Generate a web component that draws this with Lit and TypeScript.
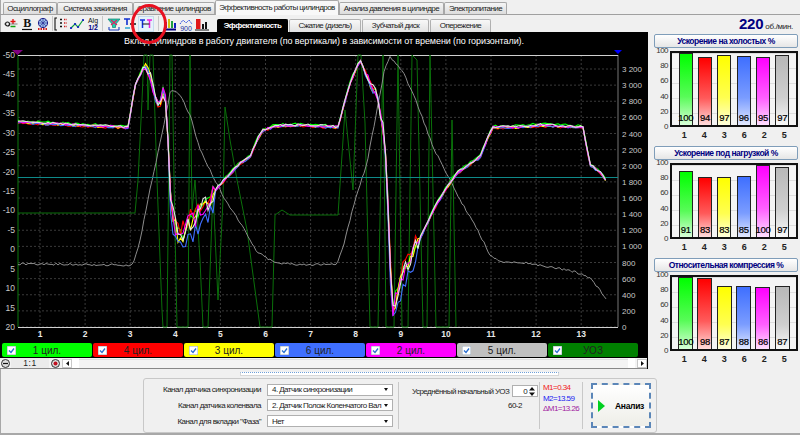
import { LitElement, html, svg, css } from 'lit';
import { customElement, property } from 'lit/decorators.js';

type Pt = [number, number];

// Curves are in reference pixels, viewBox of the plot starts at y=50.
const EFFECT: Pt[] = [
  [18, 122], [60, 124], [100, 126], [128, 127], [135, 86], [145, 64], [150, 75], [155, 97], [159, 108],
  [163, 92], [166, 100], [168, 140], [170, 197], [175, 225], [180, 240], [187, 225], [195, 220], [200, 210],
  [210, 200], [218, 187], [227, 177], [240, 163], [250, 157], [257, 140], [263, 130], [275, 126], [300, 125],
  [338, 127], [350, 83], [360, 60], [370, 83], [377, 95], [383, 127], [387, 173], [390, 260], [393, 312],
  [398, 290], [405, 270], [415, 248], [425, 228], [435, 207], [447, 187], [457, 173], [480, 157], [488, 137],
  [493, 127], [517, 127], [540, 125], [583, 127], [590, 165], [600, 172], [606, 180],
];

const RPM: Pt[] = [
  [18, 264], [133, 265], [140, 240], [150, 190], [163, 130], [170, 93], [173, 90], [180, 95], [190, 115],
  [200, 150], [215, 180], [225, 200], [245, 230], [257, 252], [273, 262], [297, 265], [337, 264], [345, 240],
  [355, 200], [367, 163], [385, 67], [390, 57], [402, 70], [417, 103], [433, 147], [450, 180], [460, 200],
  [475, 225], [490, 255], [500, 262], [530, 263], [575, 272], [590, 278], [600, 290], [606, 300],
];

const UOZ: Pt[] = [
  [18, 213], [135, 213], [138, 180], [142, 100], [144, 55], [147, 55], [148, 110], [150, 55], [153, 55],
  [157, 180], [162, 310], [163, 327], [167, 327], [170, 55], [172, 55], [174, 180], [177, 327], [188, 327],
  [190, 55], [192, 210], [195, 180], [200, 260], [203, 327], [208, 327], [213, 190], [218, 300], [223, 200],
  [225, 107], [230, 140], [237, 180], [247, 230], [260, 327], [272, 327], [275, 215], [282, 210], [290, 215],
  [338, 215], [345, 110], [353, 190], [358, 55], [361, 55], [365, 123], [370, 327], [378, 327], [383, 55],
  [386, 327], [394, 327], [398, 55], [402, 327], [408, 327], [412, 55], [417, 60], [423, 327], [427, 327],
  [430, 55], [436, 327], [449, 327], [452, 120], [456, 327],
];

const LINES = ['#00ff00', '#ff0000', '#ffff00', '#3f6fff', '#ff00ff', '#e4e4e4'];

const yLabels = [-50, -45, -40, -35, -30, -25, -20, -15, -10, -5, 0, 5, 10, 15, 20];
const rpmLabels = [3200, 3000, 2800, 2600, 2400, 2200, 2000, 1800, 1600, 1400, 1200, 1000, 800, 600, 400, 200, 0];

const rnd = (seed: number) => {
  const v = Math.sin(seed * 127.1) * 43758.5453;
  return v - Math.floor(v);
};

const at = (pts: Pt[], x: number) => {
  for (let i = 1; i < pts.length; i++) {
    if (x <= pts[i][0]) {
      const [x0, y0] = pts[i - 1];
      const [x1, y1] = pts[i];
      return y0 + ((y1 - y0) * (x - x0)) / (x1 - x0);
    }
  }
  return pts[pts.length - 1][1];
};

const noiseAt = (x: number) => {
  if ((x > 168 && x < 215) || (x > 386 && x < 420)) return 10;
  if ((x > 145 && x < 168) || (x > 365 && x < 386)) return 5;
  return 1.2;
};

const cylinderPoints = (idx: number) => {
  const out: string[] = [];
  const offset = [-1.2, 1, 0.4, 0.7, 0, -0.4][idx];
  for (let x = 18; x <= 606; x += 2.5) {
    const amp = noiseAt(x);
    const bias = idx === 3 && amp > 5 ? 11 : idx === 1 && amp > 5 ? -6 : 0;
    const y = at(EFFECT, x) + offset + bias + (rnd(x * (idx + 1.3)) - 0.5) * amp * 1.8;
    out.push(`${x},${y.toFixed(1)}`);
  }
  return out.join(' ');
};

const rpmPoints = () => {
  const out: string[] = [];
  for (let x = 18; x <= 606; x += 2) {
    out.push(`${x},${(at(RPM, x) + (rnd(x * 3.7) - 0.5) * 2.2).toFixed(1)}`);
  }
  return out.join(' ');
};

const CYL_POINTS = LINES.map((_, i) => cylinderPoints(i));
const RPM_POINTS = rpmPoints();
const UOZ_POINTS = UOZ.map((p) => p.join(',')).join(' ');

@customElement('bar-panel')
export class BarPanel extends LitElement {
  @property() heading = '';
  @property({ type: Array }) values: number[] = [];
  @property({ type: Boolean }) wide = false;

  static styles = css`
    :host {
      display: block;
      font-family: 'Liberation Sans', sans-serif;
    }
    .title {
      height: 14px;
      box-sizing: border-box;
      border: 1px solid #7f9db9;
      border-radius: 2px;
      background: linear-gradient(#ffffff, #e6e6e6);
      color: #000080;
      font-size: 8.5px;
      letter-spacing: -0.5px;
      font-weight: bold;
      line-height: 12px;
      text-align: center;
      white-space: nowrap;
    }
    .chart {
      display: grid;
      grid-template-columns: 16px 1fr;
      margin-top: 3px;
    }
    .axis {
      display: flex;
      flex-direction: column;
      justify-content: space-between;
      font-size: 8px;
      color: #333;
      text-align: right;
      padding-right: 2px;
    }
    .axis span {
      height: 0;
      line-height: 0;
    }
    .plot {
      height: 76px;
      box-sizing: border-box;
      border: 2px solid #111;
      display: flex;
      justify-content: space-around;
      align-items: flex-end;
      padding: 0 4px;
      background-color: #f4f4f4;
      background-image: repeating-linear-gradient(#dddddd 0 1px, transparent 1px 15px);
    }
    .bar {
      width: 14px;
      box-sizing: border-box;
      border: 1.5px solid #222;
      border-bottom: none;
      display: flex;
      align-items: flex-end;
      justify-content: center;
      font-size: 9.5px;
      letter-spacing: -0.3px;
      color: #000;
      padding-bottom: 2px;
      -webkit-text-stroke: 0.2px #000;
    }
    .wide .bar {
      width: 15px;
    }
    .names {
      grid-column: 2;
      display: flex;
      justify-content: space-around;
      padding: 3px 4px 0;
      font-size: 9px;
      font-weight: bold;
      color: #222;
      height: 12px;
    }
    .names span {
      width: 14px;
      text-align: center;
    }
    .c0 { background: linear-gradient(#00ff00, #58fb58 60%, #d8ffd8); }
    .c1 { background: linear-gradient(#ff0000, #ff5a5a 60%, #ffdcdc); }
    .c2 { background: linear-gradient(#ffff00, #ffff50 60%, #ffffdc); }
    .c3 { background: linear-gradient(#3f6fff, #7a9cff 60%, #e2e9ff); }
    .c4 { background: linear-gradient(#ff00ff, #ff60ff 60%, #ffe0ff); }
    .c5 { background: linear-gradient(#b8b8b8, #cfcfcf 60%, #f8f8f8); }
  `;

  render() {
    const names = [1, 4, 3, 6, 2, 5];
    return html`
      <div class="title">${this.heading}</div>
      <div class="chart ${this.wide ? 'wide' : ''}">
        <div class="axis">
          ${[100, 80, 60, 40, 20, 0].map((v) => html`<span>${v}</span>`)}
        </div>
        <div class="plot">
          ${this.values.map(
            (v, i) => html`<div class="bar c${i}" style="height:${v}%">${v}</div>`
          )}
        </div>
        <div class="names">${names.map((n) => html`<span>${n}</span>`)}</div>
      </div>
    `;
  }
}

@customElement('app-root')
export class AppRoot extends LitElement {
  static styles = css`
    :host {
      display: block;
      position: relative;
      width: 800px;
      height: 435px;
      overflow: hidden;
      background: #f0f0f0;
      box-shadow: inset 1px 0 0 #a8a8a8, inset 0 -2px 0 #a8a8a8;
      font-family: 'Liberation Sans', sans-serif;
      font-size: 8px;
      letter-spacing: -0.55px;
      color: #222;
    }
    .tabs {
      display: flex;
      height: 15px;
      padding-left: 3px;
      box-sizing: border-box;
      border-bottom: 1px solid #a0a0a0;
    }
    .tab {
      height: 12px;
      margin-top: 2px;
      box-sizing: border-box;
      border: 1px solid #a8a8a8;
      border-bottom: none;
      border-radius: 2px 2px 0 0;
      background: linear-gradient(#f6f6f6, #dcdcdc);
      line-height: 11px;
      text-align: center;
      white-space: nowrap;
    }
    .tab.on {
      height: 15px;
      margin-top: 0;
      background: #f8f8f8;
      line-height: 13px;
    }
    .toolbar {
      display: flex;
      align-items: center;
      height: 17px;
    }
    .group {
      display: flex;
      height: 15px;
      align-items: center;
      padding-right: 1px;
      border-right: 1px solid #c8c8c8;
    }
    .group:nth-child(1) { padding-left: 3px; }
    .group:nth-child(2) { padding-left: 0; }
    .group:nth-child(3) { padding-left: 3px; padding-right: 4px; }
    .group:nth-child(4) { padding-left: 3px; border-right: none; }
    .tool {
      width: 16px;
      height: 16px;
      display: flex;
      align-items: center;
      justify-content: center;
      box-sizing: border-box;
    }
    .tool.on {
      background: #e6f2fb;
      border: 1px solid #c4dcee;
    }
    .tool svg {
      width: 14px;
      height: 14px;
    }
    .subtabs {
      display: flex;
      margin-left: 6px;
      gap: 1px;
      align-self: flex-end;
    }
    .subtab {
      height: 13px;
      box-sizing: border-box;
      border: 1px solid #b0b0b0;
      border-bottom: none;
      border-radius: 2px 2px 0 0;
      background: linear-gradient(#f8f8f8, #e2e2e2);
      line-height: 12px;
      text-align: center;
      white-space: nowrap;
    }
    .subtab.on {
      background: #000;
      border-color: #000;
      color: #fff;
      font-weight: bold;
    }
    .rpm {
      margin-left: auto;
      padding-right: 7px;
      letter-spacing: -0.3px;
    }
    .rpm b {
      font-size: 15px;
      letter-spacing: -0.2px;
      color: #000080;
      margin-right: 2px;
    }
    .main {
      display: flex;
      height: 337px;
    }
    .scope {
      width: 648px;
      height: 337px;
      background: #000;
      display: flex;
      flex-direction: column;
    }
    .heading {
      height: 18px;
      color: #fff;
      font-size: 9px;
      letter-spacing: -0.09px;
      line-height: 18px;
      text-align: center;
    }
    .scope svg.plot {
      display: block;
      width: 648px;
      height: 293px;
      font-family: 'Liberation Sans', sans-serif;
      letter-spacing: 0;
    }
    .legend {
      display: flex;
      gap: 1px;
      padding: 0 2px;
      height: 15px;
    }
    .cyl {
      width: 90px;
      height: 14px;
      box-sizing: border-box;
      border-radius: 2px;
      display: flex;
      align-items: center;
      padding-left: 5px;
      font-size: 10px;
      letter-spacing: 0;
    }
    .cyl svg {
      width: 9px;
      height: 9px;
      flex: none;
    }
    .cyl span {
      flex: 1;
      text-align: center;
      padding-right: 14px;
    }
    .scroll {
      height: 11px;
      display: flex;
      align-items: center;
      background: #f4f4f4;
      border-bottom: 1px solid #888;
      box-sizing: border-box;
      margin-right: 1px;
    }
    .round {
      width: 9px;
      height: 9px;
      flex: none;
      margin-left: 1px;
    }
    .zoom {
      width: 38px;
      text-align: center;
      background: #ebebeb;
      font-size: 8.5px;
      line-height: 10px;
      margin: 0 1px;
      letter-spacing: 0.5px;
    }
    .arrow {
      width: 10px;
      height: 9px;
      background: #fff;
      border: 1px solid #c8c8c8;
      box-sizing: border-box;
      display: flex;
      align-items: center;
      justify-content: center;
      flex: none;
      margin-left: 2px;
    }
    .thumb,
    .end {
      width: 7px;
      height: 10px;
      background: #fff;
      flex: none;
    }
    .track {
      flex: 1;
      height: 9px;
      background: #f4f4f4;
      border-top: 1px solid #e0e0e0;
      box-sizing: border-box;
    }
    .side {
      width: 144px;
      margin-left: 6px;
      display: flex;
      flex-direction: column;
      padding-top: 2px;
    }
    .side bar-panel:nth-child(1),
    .side bar-panel:nth-child(2) {
      height: 112px;
    }
    .dots {
      margin: 3px 0 0 240px;
      width: 319px;
      height: 4px;
      box-sizing: border-box;
      background: #fff;
      border: 1px solid #d8d8d8;
      border-top: 1px dotted #6f9fd8;
    }
    .bottom {
      margin: 2px 0 0 143px;
      width: 514px;
      height: 55px;
      box-sizing: border-box;
      border: 1px solid #c8c8c8;
      border-radius: 3px;
      display: flex;
    }
    .channels {
      width: 255px;
      box-sizing: border-box;
      display: grid;
      grid-template-columns: 123px 127px;
      align-items: center;
      border-right: 1px solid #c8c8c8;
      margin: 3px 0;
      height: 47px;
    }
    .channels label {
      text-align: right;
      padding-right: 6px;
      white-space: nowrap;
    }
    .select {
      height: 12px;
      width: 126px;
      box-sizing: border-box;
      background: #fff;
      border: 1px solid #b0b0b0;
      display: flex;
      align-items: center;
      justify-content: space-between;
      padding: 0 4px;
      white-space: nowrap;
      overflow: hidden;
    }
    .select i {
      border: 2.5px solid transparent;
      border-top: 3px solid #111;
      border-bottom: none;
      flex: none;
      margin-left: 2px;
    }
    .uoz {
      width: 141px;
      border-right: 1px solid #c8c8c8;
      margin: 3px 0;
      box-sizing: border-box;
      padding-left: 13px;
    }
    .uoz-row {
      display: flex;
      align-items: center;
      gap: 3px;
      margin-top: 3px;
      white-space: nowrap;
    }
    .spin {
      width: 26px;
      height: 12px;
      box-sizing: border-box;
      background: #fff;
      border: 1px solid #b0b0b0;
      display: flex;
      align-items: center;
      justify-content: flex-end;
      gap: 2px;
      padding-right: 2px;
    }
    .spin svg {
      width: 6px;
      height: 9px;
    }
    .mode {
      margin: 4px 0 0 96px;
    }
    .stats {
      width: 43px;
      border-right: 1px solid #c8c8c8;
      margin: 3px 0;
      box-sizing: border-box;
      padding: 1px 0 0 3px;
      line-height: 10.5px;
      white-space: nowrap;
    }
    .m1 { color: #f02020; }
    .m2 { color: #2020f0; }
    .m3 { color: #a020a0; }
    .go {
      width: 60px;
      height: 45px;
      margin: 4px 0 0 8px;
      box-sizing: border-box;
      border: 2px dashed #5b86b8;
      background: linear-gradient(#ffffff, #eeeee8);
      display: flex;
      align-items: center;
      padding-left: 5px;
      font-size: 8.5px;
      letter-spacing: -0.3px;
      font-weight: bold;
      color: #000;
      gap: 10px;
    }
    .go svg {
      width: 7px;
      height: 12px;
    }
    .mark {
      position: absolute;
      left: 130px;
      top: 3px;
      width: 38px;
      height: 42px;
      pointer-events: none;
    }
  `;

  private icons = [
    svg`<circle cx="3.5" cy="7" r="2" fill="none" stroke="#111" stroke-width="1.2"/><path d="M9 2v5M6.5 4.5h5" stroke="#e01010" stroke-width="1.3"/><path d="M6.5 9.5h5" stroke="#10a010" stroke-width="1.5"/><path d="M0 7h2M5.500 7h8" stroke="#555" stroke-width=".7"/>`,
    svg`<text x="7" y="10" text-anchor="middle" font-family="Liberation Serif" font-weight="bold" font-size="12" fill="#111">B</text><path d="M2 12.5h10" stroke="#111" stroke-width="1.2"/>`,
    svg`<circle cx="7" cy="6" r="4.6" fill="#9cc0ec" stroke="#20208c"/><path d="M2.5 6h9M7 1.5v9M4 3l6 6M10 3l-6 6" stroke="#20208c" stroke-width=".6"/><path d="M2 12h10" stroke="#d02020" stroke-width="2" stroke-dasharray="1.5 1"/>`,
    svg`<path d="M3 1H1v12h2" fill="none" stroke="#111" stroke-width="1.1"/><path d="M6 2.5h2M6 6h2M6 9.5h2" stroke="#111" stroke-width="1.4"/><path d="M10 2.5h3M10 6h3M10 9.5h3" stroke="#d02020" stroke-width="1.6" stroke-dasharray="1 .6"/>`,
    svg`<path d="M1 11l4-4 3 3 5-7" fill="none" stroke="#10a040" stroke-width="1.2"/><path d="M1 11h.1M5 7h.1M8 10h.1M13 3h.1" stroke="#1020c0" stroke-width="2.2" stroke-linecap="round"/>`,
    svg`<text x="7" y="6" text-anchor="middle" font-family="Liberation Sans" font-size="7" fill="#111" letter-spacing="0">Alg</text><text x="7" y="13" text-anchor="middle" font-family="Liberation Sans" font-weight="bold" font-size="7" fill="#000080" letter-spacing="0">1/2</text>`,
    svg`<path d="M1 2h12L8.5 7.5v3h-3v-3z" fill="#20d0b0" stroke="#108070" stroke-width=".7"/><path d="M4 3l6 5M10 3L4 8" stroke="#e02060" stroke-width="1.1"/><path d="M2 13v-3M12 13v-3M2 13h10" stroke="#2040c0" stroke-width="1.1" fill="none"/>`,
    svg`<path d="M1 2h6M4 2v6" stroke="#1030d0" stroke-width="1.6"/><path d="M7 7h6M10 7v6" stroke="#111" stroke-width="1.4"/><path d="M2 11h5" stroke="#20a0d0" stroke-width="1.4"/>`,
    svg`<path d="M1 3h5M3.5 3v8" stroke="#1030e0" stroke-width="1.5"/><path d="M8 3h5M10.5 3v8" stroke="#f020e0" stroke-width="1.5"/><path d="M3.5 7h7" stroke="#111" stroke-width="1"/>`,
    svg`<path d="M3 11V5" stroke="#1020c0" stroke-width="2"/><path d="M6 11V2" stroke="#d0c010" stroke-width="2"/><path d="M9 11V4" stroke="#20a040" stroke-width="2"/><path d="M12 11V6" stroke="#1020c0" stroke-width="2"/><path d="M1 12.5h12" stroke="#000080" stroke-width="2"/>`,
    svg`<path d="M1 7l3-4 3 3 3-3 3 4" fill="none" stroke="#3050e0" stroke-width="1" stroke-dasharray="1.5 .7"/><text x="7" y="13.5" text-anchor="middle" font-family="Liberation Sans" font-size="7" fill="#1030a0" letter-spacing="0">900</text>`,
    svg`<rect x="1" y="2" width="4.5" height="10" fill="#e01818"/><path d="M8 12V7M11 12V5" stroke="#111" stroke-width="2"/><path d="M0 13h14" stroke="#111" stroke-width="1"/>`,
  ];

  private renderPlot() {
    const vGrid = Array.from({ length: 13 }, (_, i) => 40 + i * 45.1);
    const hGrid = rpmLabels.map((_, i) => 69 + i * 16.125);
    const rx = [1, 2, 3, 4, 5, 6, 7, 8, 9, 10, 11, 12, 13];
    return html`
      <svg class="plot" viewBox="0 50 648 293">
        ${vGrid.map(
          (x) => svg`<line x1=${x} x2=${x} y1="55" y2="327" stroke="#3a3a3a" stroke-dasharray="2 2"/>`
        )}
        ${hGrid.map(
          (y) => svg`<line x1="18" x2="618" y1=${y} y2=${y} stroke="#3a3a3a" stroke-dasharray="2 2"/>`
        )}
        <line x1="18" x2="18" y1="55" y2="327" stroke="#0c7a0c"/>
        <line x1="618" x2="618" y1="55" y2="327" stroke="#777"/>
        <line x1="18" x2="618" y1="55.5" y2="55.5" stroke="#d0d0d0"/>
        <line x1="18" x2="618" y1="327.5" y2="327.5" stroke="#d0d0d0"/>
        <polyline points=${UOZ_POINTS} fill="none" stroke="#0a700a" stroke-width="1"/>
        <polyline points=${RPM_POINTS} fill="none" stroke="#8c8c8c" stroke-width="1"/>
        <line x1="18" x2="618" y1="177.5" y2="177.5" stroke="#0e8a8a"/>
        ${CYL_POINTS.map(
          (p, i) => svg`<polyline points=${p} fill="none" stroke=${LINES[i]} stroke-width="1.1"/>`
        )}
        <path d="M12 50h11l-5.5 5z" fill="#800080"/>
        <path d="M613 49h10l-5 5z" fill="#0000ff"/>
        ${yLabels.map(
          (v, i) => svg`<text x="15" y=${55 + i * 19.43 + 3} text-anchor="end" font-size="8.5" fill="#c8c8c8">${v}</text>`
        )}
        ${rpmLabels.map(
          (v, i) => svg`<text x="622" y=${69 + i * 16.125 + 3} font-size="8" fill="#c8c8c8">${String(v).replace(/(\d)(\d{3})$/, '$1 $2')}</text>`
        )}
        ${rx.map(
          (n, i) => svg`<text x=${40 + i * 45.1} y="337" text-anchor="middle" font-size="8.5" font-weight="bold" fill="#e8e8e8">${n}</text>`
        )}
      </svg>
    `;
  }

  render() {
    const tabs: [string, number][] = [
      ['Осциллограф', 54], ['Система зажигания', 76], ['Сравнение цилиндров', 82],
      ['Эффективность работы цилиндров', 124], ['Анализ давления в цилиндре', 105], ['Электропитание', 63],
    ];
    const subtabs: [string, number][] = [
      ['Эффективность', 71], ['Сжатие (дизель)', 72], ['Зубчатый диск', 67], ['Опережение', 61],
    ];
    const legend: [string, string][] = [
      ['1 цил.', '#00ff00'], ['4 цил.', '#ff0000'], ['3 цил.', '#ffff00'], ['6 цил.', '#3f6fff'],
      ['2 цил.', '#ff00ff'], ['5 цил.', '#c0c0c0'], ['УОЗ', '#008000'],
    ];
    const groups = [this.icons.slice(0, 3), this.icons.slice(3, 6), this.icons.slice(6, 9), this.icons.slice(9)];
    return html`
      <div class="tabs">
        ${tabs.map(
          ([t, w], i) => html`<div class="tab ${i === 3 ? 'on' : ''}" style="width:${w}px">${t}</div>`
        )}
      </div>
      <div class="toolbar">
        ${groups.map(
          (g, gi) => html`<div class="group">
            ${g.map(
              (ic, i) => html`<div class="tool ${gi === 2 && i === 2 ? 'on' : ''}">
                <svg viewBox="0 0 14 14">${ic}</svg>
              </div>`
            )}
          </div>`
        )}
        <div class="subtabs">
          ${subtabs.map(
            ([t, w], i) => html`<div class="subtab ${i === 0 ? 'on' : ''}" style="width:${w}px">${t}</div>`
          )}
        </div>
        <div class="rpm"><b>220</b>об./мин.</div>
      </div>
      <div class="main">
        <div class="scope">
          <div class="heading">
            Вклад цилиндров в работу двигателя (по вертикали) в зависимости от времени (по горизонтали).
          </div>
          ${this.renderPlot()}
          <div class="legend">
            ${legend.map(
              ([t, c]) => html`<div class="cyl" style="background:${c}">
                <svg viewBox="0 0 9 9">
                  <rect width="9" height="9" fill="#fff" stroke="#9ab" />
                  <path d="M2 4.5l2 2 3-4" fill="none" stroke="#2a6fd0" stroke-width="1.3" />
                </svg>
                <span>${t}</span>
              </div>`
            )}
          </div>
          <div class="scroll">
            <svg class="round" viewBox="0 0 9 9">
              <circle cx="4.5" cy="4.5" r="4" fill="#ddd" stroke="#333" />
              <path d="M2 4.5h5" stroke="#111" stroke-width="1.2" />
            </svg>
            <div class="zoom">1:1</div>
            <svg class="round" viewBox="0 0 9 9">
              <circle cx="4.5" cy="4.5" r="4" fill="#ddd" stroke="#333" />
              <circle cx="4.5" cy="4.5" r="2" fill="#c01020" />
            </svg>
            <div class="arrow">
              <svg width="3" height="5" viewBox="0 0 3 5"><path d="M3 0v5L0 2.5z" fill="#111" /></svg>
            </div>
            <div class="thumb"></div>
            <div class="track"></div>
            <div class="end"></div>
            <div class="arrow">
              <svg width="3" height="5" viewBox="0 0 3 5"><path d="M0 0v5l3-2.5z" fill="#111" /></svg>
            </div>
          </div>
        </div>
        <div class="side">
          <bar-panel heading="Ускорение на холостых %" .values=${[100, 94, 97, 96, 95, 97]}></bar-panel>
          <bar-panel heading="Ускорение под нагрузкой %" .values=${[91, 83, 83, 85, 100, 97]}></bar-panel>
          <bar-panel heading="Относительная компрессия %" wide .values=${[100, 98, 87, 88, 86, 87]}></bar-panel>
        </div>
      </div>
      <div class="dots"></div>
      <div class="bottom">
        <div class="channels">
          <label>Канал датчика синхронизации</label>
          <div class="select">4. Датчик синхронизации<i></i></div>
          <label>Канал датчика коленвала</label>
          <div class="select">2. Датчик Полож Коленчатого Вал<i></i></div>
          <label>Канал для вкладки "Фаза"</label>
          <div class="select">Нет<i></i></div>
        </div>
        <div class="uoz">
          <div class="uoz-row">
            Усреднённый начальный УОЗ
            <div class="spin">
              0
              <svg viewBox="0 0 6 9"><path d="M3 0l3 3.5H0zM3 9L0 5.5h6z" fill="#111" /></svg>
            </div>
          </div>
          <div class="mode">60-2</div>
        </div>
        <div class="stats">
          <div class="m1">M1=0.34</div>
          <div class="m2">M2=13.59</div>
          <div class="m3">ΔM1=13.26</div>
        </div>
        <div class="go">
          <svg viewBox="0 0 7 12"><path d="M0 0l7 6-7 6z" fill="#00d020" /></svg>
          Анализ
        </div>
      </div>
      <svg class="mark" viewBox="0 0 38 42">
        <ellipse cx="19" cy="21" rx="16.5" ry="18.5" fill="none" stroke="#e81020" stroke-width="3" />
      </svg>
    `;
  }
}

declare global {
  interface HTMLElementTagNameMap {
    'app-root': AppRoot;
    'bar-panel': BarPanel;
  }
}
